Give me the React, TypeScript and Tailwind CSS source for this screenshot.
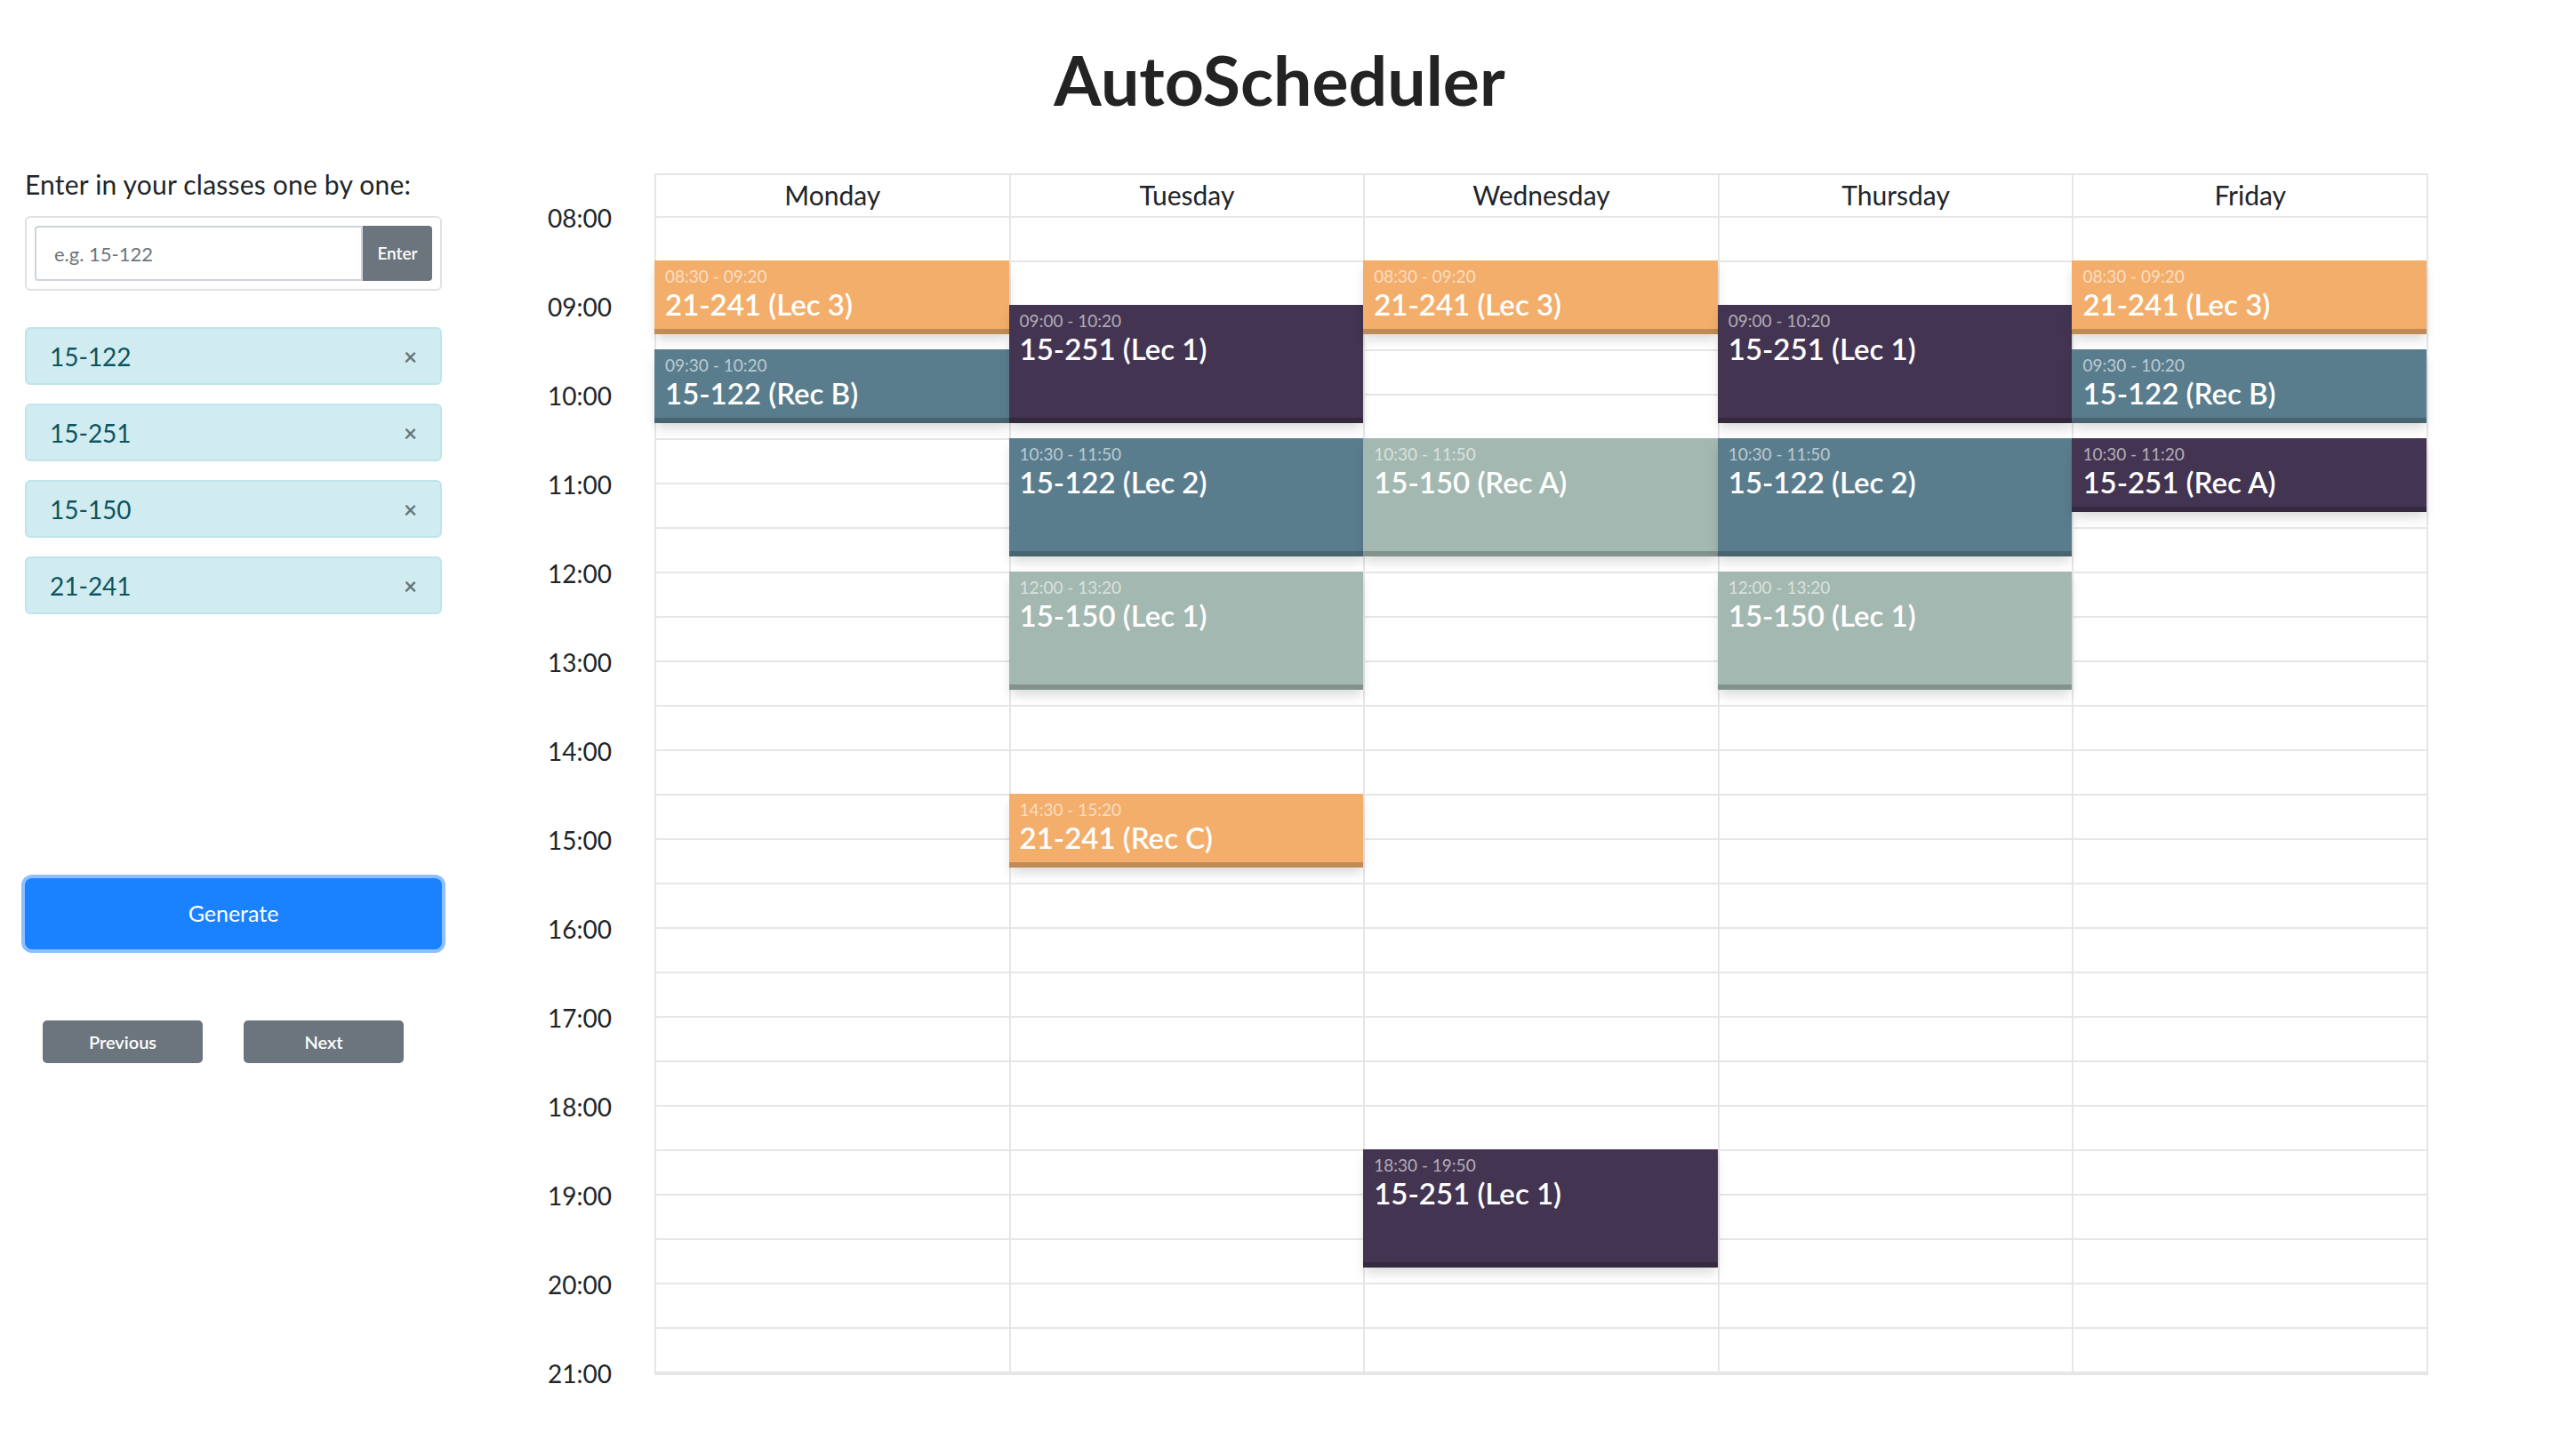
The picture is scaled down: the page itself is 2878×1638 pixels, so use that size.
import { useState } from "react";

type Color = "orange" | "blue" | "purple" | "sage";

interface Meeting {
  start: string;
  end: string;
  title: string;
  color: Color;
}

const COLORS: Record<Color, string> = {
  orange: "bg-[#f3ae6b]",
  blue: "bg-[#5a7d8e]",
  purple: "bg-[#433451]",
  sage: "bg-[#a3b8b0]",
};

const DAYS: { name: string; meetings: Meeting[] }[] = [
  {
    name: "Monday",
    meetings: [
      { start: "08:30", end: "09:20", title: "21-241 (Lec 3)", color: "orange" },
      { start: "09:30", end: "10:20", title: "15-122 (Rec B)", color: "blue" },
    ],
  },
  {
    name: "Tuesday",
    meetings: [
      { start: "09:00", end: "10:20", title: "15-251 (Lec 1)", color: "purple" },
      { start: "10:30", end: "11:50", title: "15-122 (Lec 2)", color: "blue" },
      { start: "12:00", end: "13:20", title: "15-150 (Lec 1)", color: "sage" },
      { start: "14:30", end: "15:20", title: "21-241 (Rec C)", color: "orange" },
    ],
  },
  {
    name: "Wednesday",
    meetings: [
      { start: "08:30", end: "09:20", title: "21-241 (Lec 3)", color: "orange" },
      { start: "10:30", end: "11:50", title: "15-150 (Rec A)", color: "sage" },
      { start: "18:30", end: "19:50", title: "15-251 (Lec 1)", color: "purple" },
    ],
  },
  {
    name: "Thursday",
    meetings: [
      { start: "09:00", end: "10:20", title: "15-251 (Lec 1)", color: "purple" },
      { start: "10:30", end: "11:50", title: "15-122 (Lec 2)", color: "blue" },
      { start: "12:00", end: "13:20", title: "15-150 (Lec 1)", color: "sage" },
    ],
  },
  {
    name: "Friday",
    meetings: [
      { start: "08:30", end: "09:20", title: "21-241 (Lec 3)", color: "orange" },
      { start: "09:30", end: "10:20", title: "15-122 (Rec B)", color: "blue" },
      { start: "10:30", end: "11:20", title: "15-251 (Rec A)", color: "purple" },
    ],
  },
];

const HOURS = Array.from({ length: 14 }, (_, i) => `${String(8 + i).padStart(2, "0")}:00`);
const HALF_HOURS = Array.from({ length: 26 }, (_, i) => i);

const PX_PER_MIN = 100 / 60;
const DAY_START = 8 * 60;

const toMin = (t: string) => {
  const [h, m] = t.split(":").map(Number);
  return h * 60 + m;
};

const Event = ({ meeting }: { meeting: Meeting }) => {
  const top = (toMin(meeting.start) - DAY_START) * PX_PER_MIN;
  const height = (toMin(meeting.end) - toMin(meeting.start)) * PX_PER_MIN;
  return (
    <div
      className={`absolute left-[-2px] right-0 z-10 border-b-[6px] border-black/20 px-[12px] pt-[7px] text-white shadow-[0_8px_12px_-2px_rgba(0,0,0,0.15)] ${COLORS[meeting.color]}`}
      style={{ top, height }}
    >
      <div className="text-[19px] leading-[22px] text-white/60">
        {meeting.start} - {meeting.end}
      </div>
      <div className="mt-[2px] text-[33px] font-semibold leading-[36px]">{meeting.title}</div>
    </div>
  );
};

export default function App() {
  const [classes, setClasses] = useState<string[]>(["15-122", "15-251", "15-150", "21-241"]);
  const [input, setInput] = useState("");

  const addClass = () => {
    if (!input.trim()) return;
    setClasses([...classes, input.trim()]);
    setInput("");
  };

  return (
    <div className="min-h-screen bg-white font-['Lato',sans-serif] text-[#212529]">
      <div className="h-[187px] pt-[52px]">
        <h1 className="text-center text-[77px] font-bold leading-[75px] text-[#232323]">AutoScheduler</h1>
      </div>

      <div className="flex items-start">
        <aside className="ml-[28px] w-[469px] shrink-0">
          <p className="text-[30px] leading-[40px] tracking-[0.2px]">Enter in your classes one by one:</p>
          <div className="mt-[16px] flex h-[84px] rounded-[6px] border-2 border-[#dfe1e3] p-[9px]">
            <input
              type="text"
              value={input}
              onChange={(e) => setInput(e.target.value)}
              placeholder="e.g. 15-122"
              className="min-w-0 flex-1 rounded-l-[4px] border-2 border-[#ced4da] pl-[20px] text-[22px] outline-none placeholder:text-[#6c757d]"
            />
            <button
              onClick={addClass}
              className="w-[78px] rounded-r-[4px] bg-[#6c757d] text-[19px] font-semibold text-white"
            >
              Enter
            </button>
          </div>

          <div className="mt-[41px] flex flex-col gap-[21px]">
            {classes.map((c) => (
              <div
                key={c}
                className="flex h-[65px] items-center justify-between rounded-[6px] border-2 border-[#bee5eb] bg-[#d1ecf1] px-[26px] text-[28px] text-[#0c5460]"
              >
                <span>{c}</span>
                <button
                  onClick={() => setClasses(classes.filter((x) => x !== c))}
                  className="text-[26px] font-bold leading-none text-black/50"
                >
                  ×
                </button>
              </div>
            ))}
          </div>

          <button className="mt-[297px] h-[80px] w-full rounded-[8px] bg-[#1a82ff] text-[25px] text-white ring-4 ring-[#8bbfff]">
            Generate
          </button>

          <div className="mt-[80px] flex gap-[46px] pl-[20px]">
            <button className="h-[48px] w-[180px] rounded-[5px] bg-[#6c757d] text-[20px] font-semibold text-white">
              Previous
            </button>
            <button className="h-[48px] w-[180px] rounded-[5px] bg-[#6c757d] text-[20px] font-semibold text-white">
              Next
            </button>
          </div>
        </aside>

        <div className="ml-[119px] w-[120px] shrink-0 pt-[8px]">
          {HOURS.map((h) => (
            <div key={h} className="flex h-[100px] items-center text-[28px]">
              {h}
            </div>
          ))}
        </div>

        <div className="mt-[8px] grid w-[1995px] shrink-0 grid-cols-5 border-y-2 border-l-2 border-[#e6e6e6]">
          {DAYS.map((day) => (
            <div key={day.name} className="flex flex-col border-r-2 border-[#e6e6e6]">
              <div className="flex h-[46px] items-center justify-center pb-[2px] text-[30px]">{day.name}</div>
              <div className="relative">
                {HALF_HOURS.map((i) => (
                  <div key={i} className="h-[50px] border-t-2 border-[#e6e6e6]" />
                ))}
                <div className="h-[2px] border-t-2 border-[#e6e6e6]" />
                {day.meetings.map((m) => (
                  <Event key={m.start} meeting={m} />
                ))}
              </div>
            </div>
          ))}
        </div>
      </div>
    </div>
  );
}
